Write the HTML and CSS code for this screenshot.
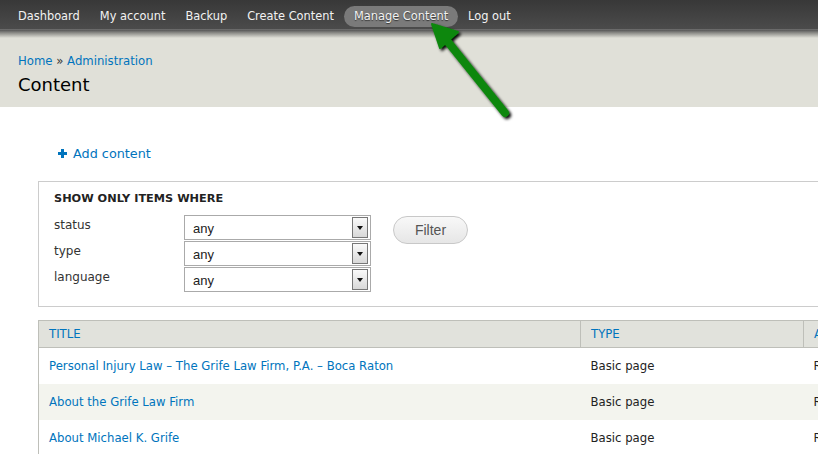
FILE: index.html
```html
<!DOCTYPE html>
<html>
<head>
<meta charset="utf-8">
<link rel="stylesheet" href="styles.css">
</head>
<body>
<div class="topbar">
  <a class="nav">Dashboard</a>
  <a class="nav">My account</a>
  <a class="nav">Backup</a>
  <a class="nav">Create Content</a>
  <a class="nav active">Manage Content</a>
  <a class="nav">Log out</a>
</div>
<div class="topshadow"></div>
<div class="header">
  <div class="breadcrumb"><a>Home</a> » <a>Administration</a></div>
  <h1 class="title">Content</h1>
</div>
<div class="page">
  <div class="actions"><span class="plus"></span><a>Add content</a></div>
  <div class="filters">
    <div class="legend">SHOW ONLY ITEMS WHERE</div>
    <div class="filter-body">
      <div class="filter-grid">
        <div class="flabel">status</div>
        <div class="select"><span class="sval">any</span><span class="sbtn"><span class="tri"></span></span></div>
        <div class="flabel">type</div>
        <div class="select"><span class="sval">any</span><span class="sbtn"><span class="tri"></span></span></div>
        <div class="flabel">language</div>
        <div class="select"><span class="sval">any</span><span class="sbtn"><span class="tri"></span></span></div>
      </div>
      <div class="btn">Filter</div>
    </div>
  </div>
  <table class="content-table">
    <thead>
      <tr><th class="c1">TITLE</th><th class="c2">TYPE</th><th class="c3">AUTHOR</th></tr>
    </thead>
    <tbody>
      <tr><td><a>Personal Injury Law – The Grife Law Firm, P.A. – Boca Raton</a></td><td>Basic page</td><td>Robert</td></tr>
      <tr class="even"><td><a>About the Grife Law Firm</a></td><td>Basic page</td><td>Robert</td></tr>
      <tr><td><a>About Michael K. Grife</a></td><td>Basic page</td><td>Robert</td></tr>
    </tbody>
  </table>
</div>
<svg class="arrow" width="120" height="120" viewBox="0 0 120 120">
  <defs>
    <filter id="sh" x="-30%" y="-30%" width="160%" height="160%">
      <feGaussianBlur in="SourceAlpha" stdDeviation="1.6"/>
      <feOffset dx="2" dy="2" result="b"/>
      <feMerge><feMergeNode in="b"/><feMergeNode in="SourceGraphic"/></feMerge>
    </filter>
  </defs>
  <g filter="url(#sh)">
    <line x1="85" y1="95" x2="28" y2="24" stroke="#0d870d" stroke-width="8" stroke-linecap="round"/>
    <polygon points="12,6 38,14 20,30" fill="#0d870d" stroke="#0d870d" stroke-width="2" stroke-linejoin="round"/>
  </g>
</svg>
</body>
</html>
```
FILE: styles.css
```css
html, body { margin: 0; padding: 0; }
body {
  width: 818px;
  height: 454px;
  overflow: hidden;
  position: relative;
  background: #fff;
  font-family: "DejaVu Sans", Verdana, sans-serif;
  font-size: 11.7px;
  color: #333;
}
a { color: #0074bd; text-decoration: none; }
.topbar {
  height: 30px;
  background: linear-gradient(#383838, #4b4b4b);
  display: flex;
  align-items: center;
  padding: 4px 0 0 8px;
  border-bottom: 1px solid #6a6a6a;
  box-sizing: border-box;
}
.nav {
  color: #f2f2f2;
  font-family: "DejaVu Sans", Verdana, sans-serif;
  font-size: 11.4px;
  padding: 3px 10px 4px;
  border-radius: 11px;
  line-height: 14px;
}
.nav.active {
  background: #7a7a7a;
  text-shadow: 0 1px 1px #333;
}
.topshadow {
  height: 8px;
  background: linear-gradient(#565656, #8a8a86 35%, #e0e0d8);
}
.header {
  background: #e0e0d8;
  padding: 15px 18px 0;
  height: 69px;
  box-sizing: border-box;
}
.breadcrumb { color: #333; font-size: 11.7px; line-height: 16px; }
.title {
  margin: 4px 0 0;
  font-weight: normal;
  font-size: 18px;
  line-height: 24px;
  color: #000;
}
.page {
  padding: 0 0 0 38px;
  width: 1100px;
}
.actions {
  display: flex;
  align-items: center;
  height: 20px;
  margin: 36px 0 0 20px;
  font-size: 12.8px;
}
.plus {
  width: 9px; height: 9px;
  background:
    linear-gradient(#0074bd, #0074bd) center / 9px 3px no-repeat,
    linear-gradient(#0074bd, #0074bd) center / 3px 9px no-repeat;
  margin-right: 6px;
}
.filters {
  margin-top: 18px;
  border: 1px solid #ccc;
  height: 126px;
  box-sizing: border-box;
  padding: 10px 15px 0;
}
.legend {
  font-weight: bold;
  font-size: 11.3px;
  color: #222;
  line-height: 14px;
}
.filter-body { display: flex; margin-top: 9px; }
.filter-grid {
  display: grid;
  grid-template-columns: 130px 187px;
  row-gap: 1px;
}
.flabel { line-height: 16px; padding-top: 2px; color: #333; font-size: 12px; }
.select {
  height: 25px;
  border: 1px solid #aaa;
  box-sizing: border-box;
  display: flex;
  align-items: center;
  background: #fff;
}
.sval {
  flex: 1;
  font-family: "Liberation Sans", Arial, sans-serif;
  font-size: 13px;
  color: #222;
  padding-left: 8px;
  padding-top: 1px;
}
.sbtn {
  width: 14px;
  height: 19px;
  margin-right: 2px;
  border: 1px solid #777;
  background: linear-gradient(#fafafa, #d8d8d8);
  display: flex;
  align-items: center;
  justify-content: center;
}
.tri {
  width: 0; height: 0;
  border-left: 3px solid transparent;
  border-right: 3px solid transparent;
  border-top: 4px solid #111;
}
.btn {
  margin-left: 22px;
  margin-top: 1px;
  width: 75px;
  height: 28px;
  box-sizing: border-box;
  border: 1px solid #c8c8c8;
  border-radius: 14px;
  background: linear-gradient(#f8f8f8, #e6e6e6);
  color: #555;
  font-family: "Liberation Sans", Arial, sans-serif;
  font-size: 14px;
  display: flex;
  align-items: center;
  justify-content: center;
}
.content-table {
  margin-top: 13px;
  border-collapse: collapse;
  width: 900px;
  border: 1px solid #bebfb9;
}
.content-table th {
  background: #e1e2dc;
  border: 1px solid #bebfb9;
  color: #0074bd;
  font-weight: normal;
  text-align: left;
  height: 26px;
  padding: 0 10px;
  font-size: 11.7px;
}
.c1 { width: 521px; }
.c2 { width: 202px; }
.content-table td {
  height: 36px;
  padding: 0 10px;
  font-size: 11.7px;
  color: #222;
}
.content-table tr.even td { background: #f3f4ee; }
.arrow {
  position: absolute;
  left: 420px;
  top: 18px;
}
```
